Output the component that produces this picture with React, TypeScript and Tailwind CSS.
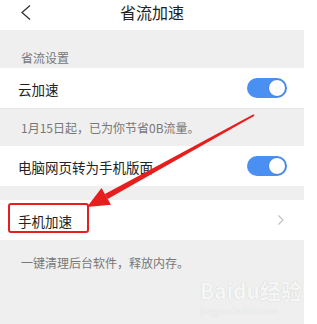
import React from "react"

const font = { fontFamily: '"Noto Sans CJK SC", "Noto Sans", sans-serif' }

function Toggle() {
  return (
    <div className="w-[40px] h-[20px] rounded-full bg-[#4a8ff2] flex items-center justify-end pr-[1px]">
      <div className="w-[18px] h-[18px] rounded-full bg-white border border-[#3f7fd8]" />
    </div>
  )
}

function Row({ label, right }: { label: string; right: React.ReactNode }) {
  return (
    <div className="h-[40px] shrink-0 bg-white flex items-center justify-between pl-[18px] pr-[17px]">
      <span className="text-[13.5px] text-[#222] leading-[16px] pt-[1px]">{label}</span>
      {right}
    </div>
  )
}

export default function App() {
  return (
    <div className="relative w-[317px] h-[324px] bg-white overflow-hidden" style={font}>
      <div className="w-[304px] h-full bg-[#efefef] flex flex-col">
        {/* header */}
        <div className="h-[30px] shrink-0 bg-white relative flex items-center justify-center pb-[6px]">
          <svg className="absolute left-[19px] top-[4px]" width="13" height="17" viewBox="0 0 13 17">
            <path d="M11 1.5 L3 8.5 L11 15.5" fill="none" stroke="#333" strokeWidth="1.3" />
          </svg>
          <span className="text-[16px] text-[#222] leading-[20px]">省流加速</span>
        </div>

        <div className="h-[38px] shrink-0 pl-[21px] pt-[14px]">
          <span className="text-[12px] text-[#777] leading-[16px]">省流设置</span>
        </div>

        <Row label="云加速" right={<Toggle />} />

        <div className="h-[38px] shrink-0 pl-[21px] flex items-center border-t border-[#e6e6e6]">
          <span className="text-[12px] text-[#777] leading-[16px]">1月15日起，已为你节省0B流量。</span>
        </div>

        <Row label="电脑网页转为手机版面" right={<Toggle />} />

        <div className="h-[14px] shrink-0" />

        <Row
          label="手机加速"
          right={
            <svg width="8" height="12" viewBox="0 0 8 12" className="mr-[2px]">
              <path d="M1.5 1.5 L6 6 L1.5 10.5" fill="none" stroke="#bdbdbd" strokeWidth="1.1" />
            </svg>
          }
        />

        <div className="shrink-0 pl-[21px] pt-[9px]">
          <span className="text-[12px] text-[#777] leading-[16px]">一键清理后台软件，释放内存。</span>
        </div>

        <div className="ml-[200px] mt-[5px] flex flex-col items-start whitespace-nowrap">
          <span className="text-[21px] font-bold leading-[24px] text-[#f6f6f6] [text-shadow:0_0_1px_#c4c4c4]">
            Baidu经验
          </span>
          <span className="text-[9px] leading-[12px] mt-[3px] text-[#f6f6f6] [text-shadow:0_0_1px_#cccccc]">
            jingyan.baidu.com
          </span>
        </div>
      </div>

      {/* annotation */}
      <div className="absolute left-[8px] top-[203px] w-[81px] h-[30px] border-[2.5px] border-[#e61e1e] rounded-[3px]" />
      <svg className="absolute left-0 top-0" width="317" height="324" viewBox="0 0 317 324">
        <polygon points="254.5,115.8 253.5,114.2 104.9,194 107.7,199" fill="#e61e1e" />
        <polygon points="87,207 101.5,188 111,204.8" fill="#e61e1e" />
      </svg>
    </div>
  )
}
